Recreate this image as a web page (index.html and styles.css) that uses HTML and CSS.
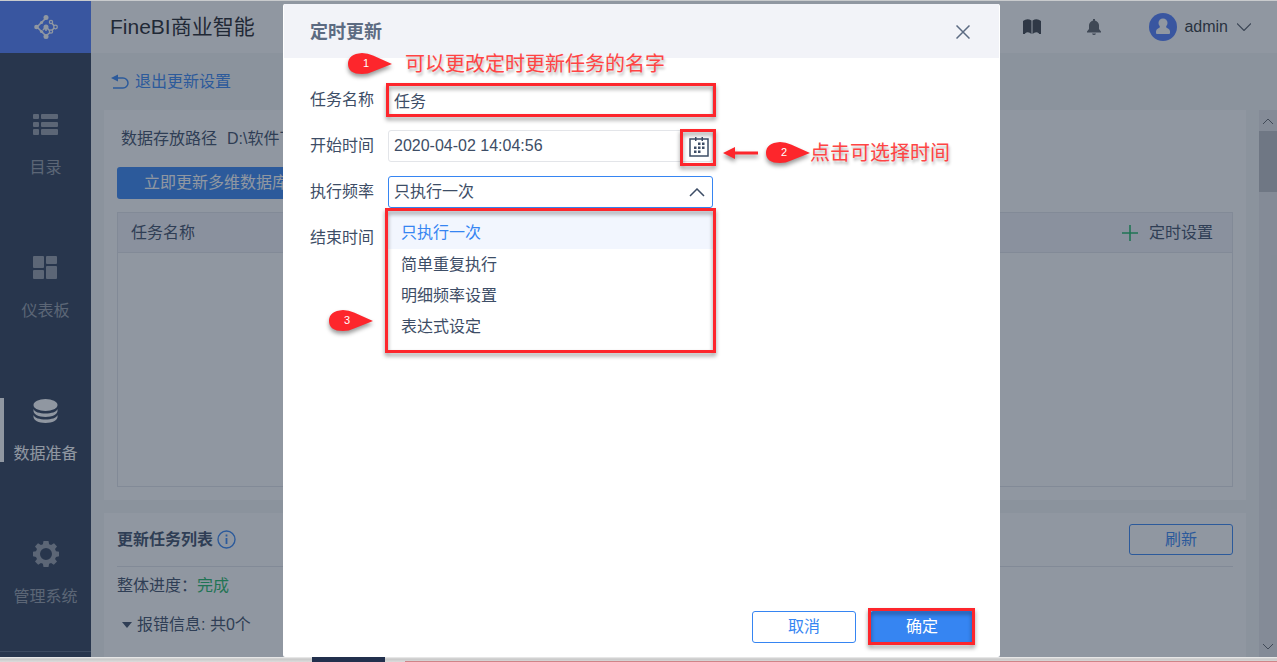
FILE: index.html
```html
<!DOCTYPE html>
<html lang="zh-CN">
<head>
    <meta charset="UTF-8">
    <meta name="viewport" content="width=device-width, initial-scale=1.0">
    <title>FineBI商业智能</title>
    <link rel="stylesheet" href="styles.css">
</head>
<body>
    <div class="app">
        <nav class="sidebar">
            <a href="#" class="logo" aria-label="FineBI">
                <svg width="26" height="26" viewBox="0 0 26 26" fill="none" stroke="#fff" stroke-width="1.6">
                    <path d="M13 4 4 13l9 9 5-4.500 4-4.500-4-5M13 13v4M10 16l3-3 4 4"/>
                    <g fill="#fff" stroke="none">
                        <circle cx="13" cy="3.500" r="2.500"/><circle cx="3.500" cy="13" r="2.300"/><circle cx="13" cy="22.500" r="2.500"/>
                        <circle cx="13" cy="13" r="2.500"/><circle cx="8.500" cy="8.500" r="1.600"/><circle cx="8.500" cy="17.500" r="1.600"/>
                    </g>
                    <g fill="#517dfd" stroke-width="1.3">
                        <circle cx="18" cy="8" r="1.600"/><circle cx="18" cy="17.500" r="1.600"/><circle cx="22.500" cy="13" r="1.800"/>
                    </g>
                </svg>
            </a>
            <a href="#" class="nav-item">
                <svg width="26" height="26" viewBox="0 0 26 26" fill="currentColor">
                    <rect x="0" y="2" width="6" height="5" rx="1"/><rect x="8" y="2" width="17" height="5" rx="1"/>
                    <rect x="0" y="10" width="6" height="5" rx="1"/><rect x="8" y="10" width="17" height="5" rx="1"/>
                    <rect x="0" y="17" width="6" height="6" rx="1"/><rect x="8" y="17" width="17" height="6" rx="1"/>
                </svg>
                <span>目录</span>
            </a>
            <a href="#" class="nav-item">
                <svg width="26" height="26" viewBox="0 0 26 26" fill="currentColor">
                    <rect x="0" y="1" width="11" height="12" rx="1"/><rect x="13" y="1" width="11" height="8" rx="1"/>
                    <rect x="0" y="15" width="11" height="9" rx="1"/><rect x="13" y="11" width="11" height="13" rx="1"/>
                </svg>
                <span>仪表板</span>
            </a>
            <a href="#" class="nav-item active">
                <svg width="26" height="26" viewBox="0 0 26 26" fill="currentColor">
                    <ellipse cx="12.500" cy="7" rx="12" ry="6"/>
                    <path d="M.5 11c1 3 6 4.500 12 4.500s11-1.500 12-4.500v2c0 3-5 6-12 6s-12-3-12-6z"/>
                    <path d="M.5 17c1 3 6 4.500 12 4.500s11-1.500 12-4.500v2c0 3-5 6-12 6s-12-3-12-6z"/>
                </svg>
                <span>数据准备</span>
            </a>
            <a href="#" class="nav-item">
                <svg width="26" height="26" viewBox="0 0 26 26" fill="currentColor">
                    <path fill-rule="evenodd" d="M10.500 0h5l.6 3.200 2 .9L21 2.300 24 5.600 22 8l1 2.200 3 .5v4.600l-3 .6-1 2.100 2 2.600-3.200 3.200-2.700-1.900-2 .9-.6 3.200h-5l-.6-3.200-2-.9-2.700 1.900L2 20.600 4 18l-1-2.100-3-.6v-4.600l3-.5L4 8 2 5.600 5 2.300l2.900 1.800 2-.9zM13 7a6 6 0 1 0 0 12 6 6 0 0 0 0-12z"/>
                </svg>
                <span>管理系统</span>
            </a>
            <div class="sidebar-end"></div>
        </nav>

        <div class="main">
            <header class="topbar">
                <h1>FineBI商业智能</h1>
                <button type="button" class="icon-btn" aria-label="帮助">
                    <svg width="18" height="16" viewBox="0 0 18 16" fill="#3c4148">
                        <path d="M0 2Q4-1 8.500 1.500V15Q5 12 2 14.500V15H0zM18 2Q14-1 9.500 1.500V15Q13 12 16 14.500V15h2z"/>
                    </svg>
                </button>
                <button type="button" class="icon-btn bell" aria-label="消息">
                    <svg width="14" height="16" viewBox="0 0 14 16" fill="#5c6066">
                        <path d="M6 0h2v1.500Q11.500 2.500 12 6v4l2 2.500v1H0v-1L2 10V6Q2.500 2.500 6 1.500zM5 14.500h4q-.5 1.500-2 1.500t-2-1.500z"/>
                    </svg>
                </button>
                <button type="button" class="user">
                    <svg width="28" height="28" viewBox="0 0 28 28">
                        <circle cx="14" cy="14" r="14" fill="#517dfd"/>
                        <circle cx="14" cy="10" r="4.500" fill="#fff"/>
                        <path d="M11 13h6q0 2 2 2.500 2 1 2 3V20q0 1-1 1H8q-1 0-1-1v-1.500q0-2 2-3 2-.5 2-2.500z" fill="#fff"/>
                    </svg>
                    <span>admin</span>
                    <svg width="14" height="8" viewBox="0 0 14 8" fill="none" stroke="#555b66" stroke-width="1.200"><path d="M0 .5l7 7 7-7"/></svg>
                </button>
            </header>

            <a href="#" class="back">
                <svg width="18" height="16" viewBox="0 0 18 16" fill="none" stroke="currentColor" stroke-width="1.500">
                    <path d="M5 4h7a5 5 0 0 1 0 10H2"/><path d="M7 .5v7L0 4z" fill="currentColor" stroke="none"/>
                </svg>
                <span>退出更新设置</span>
            </a>

            <div class="scroller">
                <div class="panels">
                    <section class="panel">
                        <p class="path"><span>数据存放路径</span><span>D:\软件下载</span></p>
                        <button type="button" class="btn-update">立即更新多维数据库</button>
                        <table class="tasks">
                            <thead>
                                <tr>
                                    <th>任务名称</th>
                                    <th class="action">
                                        <button type="button">
                                            <svg width="16" height="16" viewBox="0 0 16 16" stroke="#1fb866" stroke-width="1.600"><path d="M8 0v16M0 8h16"/></svg>
                                            定时设置
                                        </button>
                                    </th>
                                </tr>
                            </thead>
                            <tbody>
                                <tr><td colspan="2"></td></tr>
                            </tbody>
                        </table>
                    </section>
                    <section class="panel panel-list">
                        <div class="list-head">
                            <h2>更新任务列表</h2>
                            <svg width="19" height="19" viewBox="0 0 19 19" fill="none" stroke="#3685f2" stroke-width="1.400">
                                <circle cx="9.500" cy="9.500" r="8.500"/><path d="M9.500 8v6M9.500 4.500v2" stroke-width="1.800"/>
                            </svg>
                            <button type="button" class="btn-refresh">刷新</button>
                        </div>
                        <p class="progress">整体进度：<span>完成</span></p>
                        <p class="errors"><i class="caret"></i>报错信息: 共0个</p>
                    </section>
                </div>
                <div class="scrollbar">
                    <svg width="12" height="21" viewBox="0 0 12 21"><path d="M1 14l5-5 5 5"/></svg>
                    <div class="thumb"></div>
                    <svg class="down" width="12" height="21" viewBox="0 0 12 21"><path d="M1 8l5 5 5-5"/></svg>
                </div>
            </div>
        </div>

        <div class="mask">
            <div class="dialog" role="dialog" aria-labelledby="dialogTitle">
                <div class="dialog-head">
                    <h2 id="dialogTitle">定时更新</h2>
                    <button type="button" class="close" aria-label="关闭">
                        <svg width="14" height="14" viewBox="0 0 14 14" stroke="#5c6b82" stroke-width="1.500"><path d="M.5.5l13 13M13.500.5l-13 13"/></svg>
                    </button>
                </div>

                <form class="dialog-body" id="timerForm">
                    <div class="row">
                        <label for="taskName">任务名称</label>
                        <div class="field">
                            <input type="text" id="taskName" value="任务">
                            <div class="mark mark-field"></div>
                        </div>
                        <div class="note note-name">
                            <span class="pin"><svg width="44" height="22" viewBox="0 0 44 22"><path d="M44 11 25 2.500Q20 0 14 0 0 1 0 11t14 10q6 0 11-2.500z"/></svg><b>1</b></span>
                            <span>可以更改定时更新任务的名字</span>
                        </div>
                    </div>
                    <div class="row">
                        <label for="startTime">开始时间</label>
                        <div class="field">
                            <input type="text" id="startTime" value="2020-04-02 14:04:56">
                            <button type="button" class="calendar" aria-label="选择时间">
                                <svg width="20" height="20" viewBox="0 0 20 20" fill="#3d4d66">
                                    <path d="M1 2h18v17H1z" fill="none" stroke="#3d4d66" stroke-width="1.500"/>
                                    <path d="M6 0h1.500v4H6zM12.500 0H14v4h-1.500zM9 5.500h2.500V8H9zM13 5.500h2.500V8H13zM5 9.500h2.500V12H5zM9 9.500h2.500V12H9zM13 9.500h2.500V12H13zM5 13.500h2.500V16H5zM9 13.500h2.500V16H9z"/>
                                </svg>
                            </button>
                            <div class="mark mark-calendar"></div>
                        </div>
                        <div class="note note-time">
                            <svg width="35" height="12" viewBox="0 0 35 12"><path d="M0 6l12-6v4.500h23v3H12V12z"/></svg>
                            <span class="pin"><svg width="44" height="22" viewBox="0 0 44 22"><path d="M44 11 25 2.500Q20 0 14 0 0 1 0 11t14 10q6 0 11-2.500z"/></svg><b>2</b></span>
                            <span>点击可选择时间</span>
                        </div>
                    </div>
                    <div class="row">
                        <label for="frequency">执行频率</label>
                        <div class="field">
                            <select id="frequency">
                                <option>只执行一次</option>
                                <option>简单重复执行</option>
                                <option>明细频率设置</option>
                                <option>表达式设定</option>
                            </select>
                            <svg class="chevron" width="16" height="9" viewBox="0 0 16 9" fill="none" stroke="#3d4d66" stroke-width="1.500"><path d="M1 8l7-7 7 7"/></svg>
                            <ul class="menu" role="listbox" aria-label="执行频率">
                                <li class="selected" role="option" aria-selected="true">只执行一次</li>
                                <li role="option">简单重复执行</li>
                                <li role="option">明细频率设置</li>
                                <li role="option">表达式设定</li>
                            </ul>
                            <div class="mark mark-menu"></div>
                        </div>
                    </div>
                    <div class="row">
                        <span class="label">结束时间</span>
                        <div class="note note-menu">
                            <span class="pin"><svg width="44" height="22" viewBox="0 0 44 22"><path d="M44 11 25 2.500Q20 0 14 0 0 1 0 11t14 10q6 0 11-2.500z"/></svg><b>3</b></span>
                        </div>
                    </div>
                </form>

                <div class="dialog-foot">
                    <button type="button" class="btn">取消</button>
                    <div class="field-ok">
                        <button type="submit" form="timerForm" class="btn btn-primary">确定</button>
                        <div class="mark mark-ok"></div>
                    </div>
                </div>
            </div>
        </div>
    </div>
    <div class="desktop-edge"><i class="tile"></i><i class="line"></i></div>
</body>
</html>
```

FILE: styles.css
```css
* { box-sizing: border-box; }
body { margin: 0; height: 100vh; display: flex; flex-direction: column; overflow: hidden; border-top: 1px solid #c9cbcd; font-family: "Liberation Sans", "Noto Sans CJK SC", sans-serif; font-size: 16px; line-height: 24px; color: #3d4d66; }
h1, h2, p, ul { margin: 0; padding: 0; }
a { text-decoration: none; }
svg { display: block; flex: none; }
button { font: inherit; color: inherit; background: none; border: none; padding: 0; cursor: pointer; }
.app { position: relative; flex: 1; min-height: 0; display: flex; background: #f5f6f7; }

/* sidebar */
.sidebar { width: 91px; flex: none; display: flex; flex-direction: column; background: #2f3d57; overflow: hidden; }
.logo { height: 52px; flex: none; display: flex; align-items: center; justify-content: center; background: #517dfd; }
.nav-item { position: relative; height: 143px; flex: none; display: flex; flex-direction: column; align-items: center; gap: 18px; padding-top: 59px; color: #969da9; }
.nav-item.active { color: #fff; }
.nav-item.active::before { content: ""; position: absolute; left: 0; top: 59px; width: 4px; height: 64px; background: #fff; }
.sidebar-end { margin-top: auto; height: 6px; flex: none; border-top: 1px solid #56647d; }

/* page */
.main { flex: 1; min-width: 0; display: flex; flex-direction: column; }
.topbar { height: 52px; flex: none; display: flex; align-items: center; padding: 0 26px 0 19px; background: #fff; color: #31353b; }
.topbar h1 { flex: 1; font-size: 21px; font-weight: normal; line-height: 32px; color: #1f2329; }
.bell { margin-left: 46px; }
.user { display: flex; align-items: center; gap: 7px; margin-left: 48px; }
.user span { margin-right: 2px; }
.back { height: 57px; flex: none; display: flex; align-items: center; gap: 6px; padding-left: 20px; color: #3685f2; }
.scroller { flex: 1; min-height: 0; display: flex; gap: 13px; padding-left: 13px; }
.panels { flex: 1; min-width: 0; display: flex; flex-direction: column; gap: 13px; overflow: hidden; }
.panel { flex: none; padding: 0 13px 13px; background: #fff; }
.path { display: flex; gap: 10px; padding: 17px 4px 16px; }
.btn-update { display: block; height: 32px; padding: 0 27px; border-radius: 3px; background: #3685f2; color: #fff; }
.tasks { width: 100%; margin-top: 13px; border: 1px solid #e3e4ea; border-spacing: 0; }
.tasks th { height: 40px; padding: 0 13px; border-bottom: 1px solid #e3e4ea; background: #f2f2f8; font-weight: normal; text-align: left; }
.tasks .action { padding-right: 19px; }
.action button { display: flex; align-items: center; gap: 11px; margin-left: auto; }
.tasks td { height: 233px; padding: 0; }
.panel-list { flex: 1; }
.list-head { display: flex; align-items: center; gap: 4px; height: 54px; border-bottom: 1px solid #e3e4ea; }
.list-head h2 { font-size: 16px; }
.btn-refresh { width: 104px; height: 31px; margin-left: auto; border: 1px solid #3685f2; border-radius: 3px; color: #3685f2; }
.progress { padding-top: 7px; }
.progress span { color: #1fb866; }
.errors { display: flex; align-items: center; gap: 5px; padding: 15px 0 0 5px; }
.caret { border: 5px solid transparent; border-top: 6px solid #3d4d66; border-bottom: none; }
.scrollbar { width: 18px; flex: none; display: flex; flex-direction: column; align-items: center; background: #e6e7ea; }
.scrollbar path { fill: none; stroke: #60656d; stroke-width: 1; }
.thumb { width: 100%; height: 61px; background: #bcbec4; }
.down { margin-top: auto; }

/* dialog */
.mask { position: absolute; inset: 0; display: flex; justify-content: center; padding: 3px 0 0 6px; background: rgba(33, 47, 67, 0.5); }
.dialog { width: 717px; display: flex; flex-direction: column; background: #fff; border-radius: 2px; }
.dialog-head { height: 54px; flex: none; display: flex; align-items: center; justify-content: space-between; margin: 0 1px; padding: 2px 29px 0 26px; background: #f2f3f8; }
.dialog-head h2 { font-size: 18px; color: #5c6b82; }
.dialog-body { flex: 1; display: flex; flex-direction: column; gap: 14px; padding: 26px 27px; }
.row { position: relative; height: 32px; display: flex; align-items: center; }
.row label, .label { width: 78px; }
.field { position: relative; width: 325px; }
.field input, .field select { display: block; width: 100%; height: 32px; padding: 0 5px; border: 1px solid #e3e5e9; border-radius: 3px; outline: none; background: #fff; font: inherit; color: #3d4d66; }
.field select { appearance: none; border-color: #3685f2; }
.calendar { position: absolute; right: 4px; top: 7px; }
.chevron { position: absolute; right: 8px; top: 12px; pointer-events: none; }
.menu { position: absolute; z-index: 1; left: 0; top: 32px; width: 100%; padding: 3px 0 11px; list-style: none; background: #fff; }
.menu li { height: 31px; padding-left: 13px; line-height: 31px; }
.menu .selected { height: 38px; padding-top: 6px; background: #f2f6fe; color: #3685f2; }
.dialog-foot { display: flex; justify-content: flex-end; gap: 14px; padding: 0 26px 14px; }
.btn { display: block; width: 104px; height: 32px; border: 1px solid #3685f2; border-radius: 3px; color: #3685f2; }
.btn-primary { background: #3685f2; color: #fff; }
.field-ok { position: relative; }

/* red callouts */
.mark { position: absolute; z-index: 2; border: 3px solid #fd262c; filter: drop-shadow(0 3px 2px rgba(0, 0, 0, 0.4)); pointer-events: none; }
.mark-field { inset: -1px -3px -1px -2px; }
.mark-calendar { top: -1px; right: -3px; width: 36px; height: 37px; }
.mark-menu { left: -3px; right: -3px; top: 32px; height: 145px; }
.mark-ok { inset: -3px -1px -2px -2px; }
.note { position: absolute; display: flex; align-items: center; font-size: 20px; white-space: nowrap; color: #ff4444; text-shadow: 1px 3px 3px rgba(0, 0, 0, 0.3); }
.note svg { fill: #fd262c; filter: drop-shadow(0 3px 2px rgba(0, 0, 0, 0.4)); }
.note-name { left: 38px; top: -32px; gap: 13px; }
.note-time { left: 413px; top: 11px; }
.note-time .pin { margin-left: 8px; }
.note-menu { left: 19px; top: 88px; }
.pin { position: relative; }
.pin b { position: absolute; left: 0; top: 0; width: 36px; font-size: 11px; font-weight: normal; line-height: 21px; text-align: center; color: #fff; text-shadow: none; }

/* strip under the window */
.desktop-edge { height: 5px; flex: none; display: flex; align-items: flex-end; padding-left: 312px; background: linear-gradient(#f0f0f0, #c8c8c8 40%, #dcdcdc); }
.tile { width: 73px; height: 100%; background: #22304d; }
.line { flex: 1; height: 1px; margin-left: 20px; background: #d08488; }
```
